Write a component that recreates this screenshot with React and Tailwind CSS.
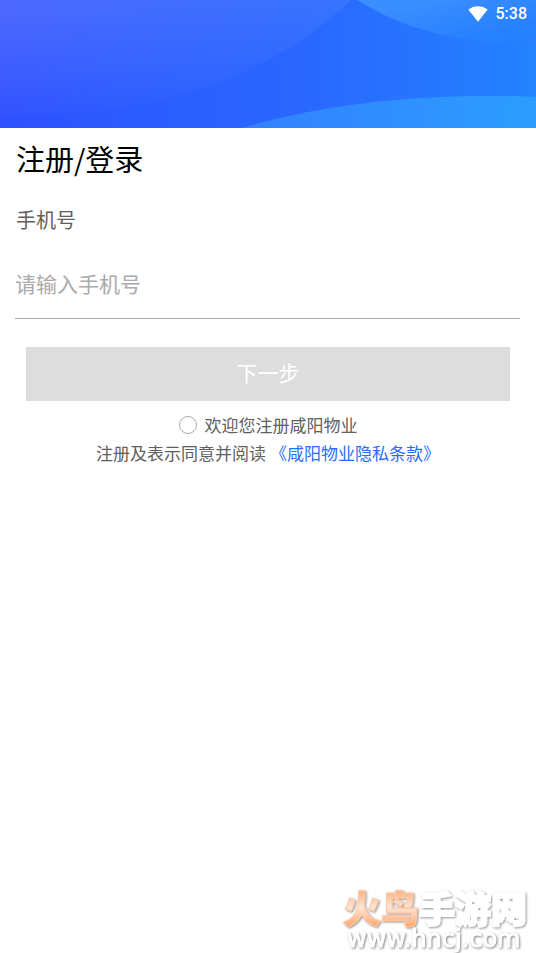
import React, { useState } from "react";

function StatusBar() {
  return (
    <div className="relative flex items-center justify-end gap-2 pr-[9px] h-7 text-white">
      <svg viewBox="0 0 20 16" className="w-5 h-4" fill="currentColor" aria-hidden="true">
        <path d="M10 15.8 0.3 3.6C3.2 1.3 6.5 0.2 10 0.2s6.8 1.1 9.7 3.4z" />
      </svg>
      <span className="font-['Roboto',sans-serif] text-base font-medium">5:38</span>
    </div>
  );
}

function Banner() {
  return (
    <header className="relative h-32 overflow-hidden">
      <svg viewBox="0 0 536 128" preserveAspectRatio="none" className="absolute inset-0 w-full h-full" aria-hidden="true">
        <defs>
          <linearGradient id="base" x1="0" y1="0" x2="536" y2="0" gradientUnits="userSpaceOnUse">
            <stop offset="0" stopColor="#2f50ff" />
            <stop offset="0.25" stopColor="#2b5cff" />
            <stop offset="0.55" stopColor="#2a66ff" />
            <stop offset="1" stopColor="#2383ff" />
          </linearGradient>
          <linearGradient id="left" x1="0" y1="0" x2="350" y2="0" gradientUnits="userSpaceOnUse">
            <stop offset="0" stopColor="#4c68ff" />
            <stop offset="1" stopColor="#3a76ff" />
          </linearGradient>
          <linearGradient id="fade" x1="150" y1="0" x2="162" y2="118" gradientUnits="userSpaceOnUse">
            <stop offset="0" stopColor="#fff" />
            <stop offset="1" stopColor="#000" />
          </linearGradient>
          <mask id="leftMask">
            <rect width="536" height="128" fill="url(#fade)" />
          </mask>
          <linearGradient id="top" x1="430" y1="0" x2="440" y2="46" gradientUnits="userSpaceOnUse">
            <stop offset="0" stopColor="#3b8eff" />
            <stop offset="1" stopColor="#2680ff" />
          </linearGradient>
          <linearGradient id="bottom" x1="240" y1="0" x2="536" y2="0" gradientUnits="userSpaceOnUse">
            <stop offset="0" stopColor="#3480ff" />
            <stop offset="1" stopColor="#2b9dff" />
          </linearGradient>
        </defs>
        <rect width="536" height="128" fill="url(#base)" />
        <path d="M0 0H351C315 35 265 66 210 86C145 108 70 118 0 116Z" fill="url(#left)" mask="url(#leftMask)" />
        <path d="M357 0C405 30 460 44 536 45V0Z" fill="url(#top)" />
        <path d="M242 128C320 104 425 92 536 97V128Z" fill="url(#bottom)" />
      </svg>
      <StatusBar />
    </header>
  );
}

function Watermark() {
  return (
    <footer className="mt-auto self-end w-[193px] flex flex-col items-start select-none">
      <div className="flex items-center h-9 text-4xl leading-10 font-black whitespace-nowrap drop-shadow-[1px_1px_1px_#999999]">
        <span className="block bg-linear-to-b from-[#ffa468] via-[#ffe6d6] to-[#ffa468] bg-clip-text text-transparent text-[38px] leading-10 [-webkit-text-stroke:1px_#ffc9a5]">火鸟</span>
        <span className="text-white [-webkit-text-stroke:2px_white]">手游网</span>
      </div>
      <div className="pl-1 font-['DejaVu_Sans',sans-serif] text-2xl leading-7 text-white [-webkit-text-stroke:1px_white] drop-shadow-[1px_1px_1px_#888888]">
        www.hncj.com
      </div>
    </footer>
  );
}

export default function App() {
  const [phone, setPhone] = useState("");
  const [agreed, setAgreed] = useState(false);

  return (
    <div className="min-h-screen flex flex-col bg-white font-['Noto_Sans_CJK_SC',sans-serif]">
      <Banner />

      <main>
        <form onSubmit={(e) => e.preventDefault()}>
          <div className="px-4 pt-[10px]">
            <h1 className="text-[29px] leading-10 text-black">注册/登录</h1>
            <label htmlFor="phone" className="block mt-[26px] text-xl leading-8 text-[#606060]">手机号</label>
          </div>
          <div className="mt-5 pl-[15px] pr-4">
            <input
              id="phone"
              type="tel"
              value={phone}
              onChange={(e) => setPhone(e.target.value)}
              placeholder="请输入手机号"
              className="block w-full h-[63px] pb-2 border-b border-[#aaaaaa] text-[21px] text-[#606060] placeholder:text-[#aaaaaa] outline-none"
            />
          </div>
          <div className="px-[26px] mt-7">
            <button type="submit" className="block w-full h-[54px] pb-0.5 bg-[#dddddd] text-[21px] text-white">下一步</button>
          </div>

          <div className="mt-[10px] text-center text-[17px] leading-7 text-[#606060]">
            <label className="flex items-center justify-center gap-2">
              <input
                type="checkbox"
                checked={agreed}
                onChange={(e) => setAgreed(e.target.checked)}
                className="appearance-none size-[18px] rounded-full border border-[#aaaaaa] checked:bg-[#2b6cff]"
              />
              欢迎您注册咸阳物业
            </label>
            <p>
              注册及表示同意并阅读{" "}
              <a href="#privacy" className="text-[#2b6cff]">《咸阳物业隐私条款》</a>
            </p>
          </div>
        </form>
      </main>

      <Watermark />
    </div>
  );
}
